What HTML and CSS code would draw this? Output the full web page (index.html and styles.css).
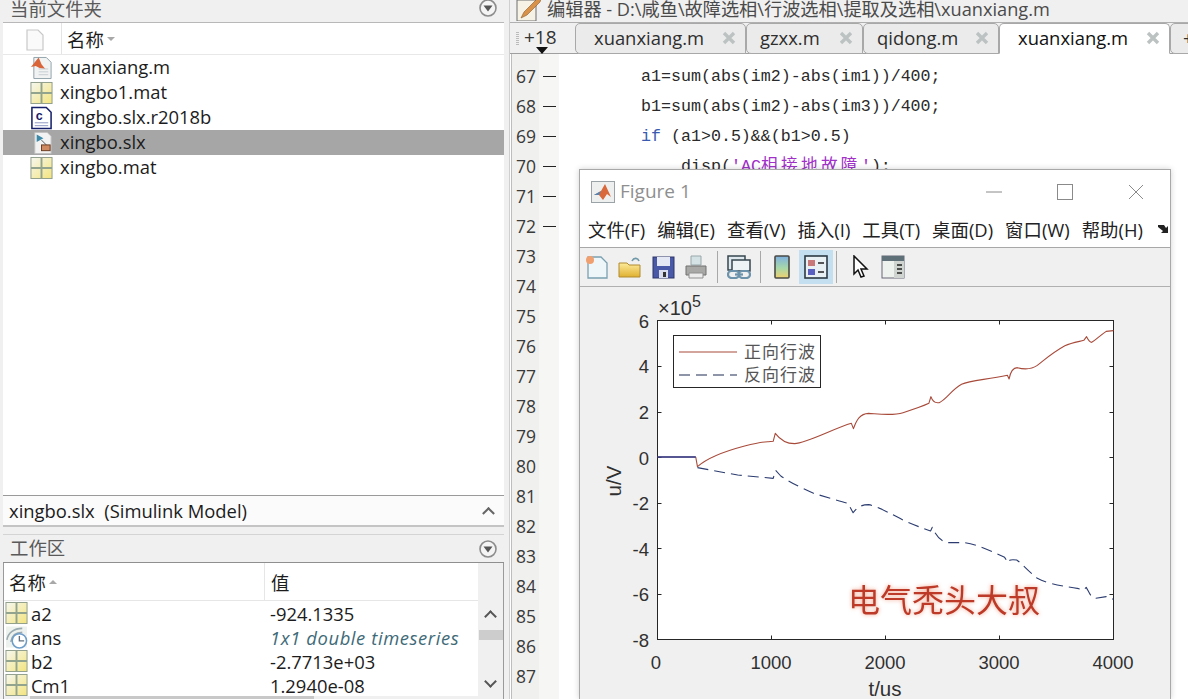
FILE: index.html
```html
<!DOCTYPE html>
<html lang="zh">
<head>
<meta charset="utf-8">
<title>MATLAB</title>
<link rel="stylesheet" href="styles.css">
</head>
<body>
<svg class="defs" width="0" height="0" aria-hidden="true">
  <defs>
    <linearGradient id="mat" x1="0" y1="0" x2="1" y2="1"><stop offset="0" stop-color="#f6f7f0"/><stop offset="1" stop-color="#f3e47e"/></linearGradient>
    <linearGradient id="cbar" x1="0" y1="0" x2="0" y2="1"><stop offset="0" stop-color="#7fb0e0"/><stop offset=".55" stop-color="#a8d8a8"/><stop offset="1" stop-color="#f0d070"/></linearGradient>
    <linearGradient id="folder" x1="0" y1="0" x2="0" y2="1"><stop offset="0" stop-color="#fdeb9c"/><stop offset="1" stop-color="#e0b030"/></linearGradient>
    <symbol id="i-mat" viewBox="0 0 24 24">
      <rect x="1" y="1" width="22" height="22" fill="url(#mat)" stroke="#8d9c88"/>
      <path d="M12 1V23M1 12H23" stroke="#93a48e" stroke-width="2" fill="none"/>
    </symbol>
    <symbol id="i-chevron" viewBox="0 0 20 20">
      <circle cx="10" cy="10" r="8" fill="#f4f4f4" stroke="#8c8c8c" stroke-width="1.6"/>
      <path d="M5.5 7.5H14.5L10 13.5Z" fill="#555"/>
    </symbol>
    <symbol id="i-x" viewBox="0 0 14 14">
      <path d="M2 2L12 12M12 2L2 12" stroke="#bcc2c2" stroke-width="3.4" fill="none"/>
    </symbol>
  </defs>
</svg>

<div class="app">
  <section class="left">
    <div class="panel-title files-title">
      <span>当前文件夹</span>
      <svg class="chev"><use href="#i-chevron"/></svg>
    </div>
    <div class="files-head">
      <div class="fh-icon">
        <svg width="20" height="22" viewBox="0 0 20 22"><path d="M2 1H13L18 6V21H2Z" fill="#fafafa" stroke="#c8c8c8" stroke-width="1.2"/></svg>
      </div>
      <div class="fh-name">名称<i class="sort-down"></i></div>
    </div>
    <ul class="files">
      <li class="file">
        <svg class="ficon" viewBox="0 0 24 24"><path d="M4 1H17L22 6V23H4Z" fill="#f1f3f3" stroke="#8ea0a8"/><path d="M1 11L9 1L12 8L16 13L10 12L6 10Z" fill="#d9653a"/><path d="M9 13H19M9 16H19M9 19H19" stroke="#c6ccd0"/></svg>
        <span class="fname">xuanxiang.m</span>
      </li>
      <li class="file"><svg class="ficon"><use href="#i-mat"/></svg><span class="fname">xingbo1.mat</span></li>
      <li class="file">
        <svg class="ficon" viewBox="0 0 24 24"><path d="M2 1H17L22 6V23H2Z" fill="#fff" stroke="#16206a" stroke-width="1.6"/><text class="cglyph" x="6" y="14">c</text><path d="M5 17H19M5 20H19" stroke="#8a94c0"/></svg>
        <span class="fname">xingbo.slx.r2018b</span>
      </li>
      <li class="file selected">
        <svg class="ficon" viewBox="0 0 24 24"><path d="M5 1H18L22 5V23H5Z" fill="#f2f2f2" stroke="#c0c0c0"/><path d="M7 3V11L14 7Z" fill="#3d8aa8"/><path d="M12 9L17 14" stroke="#555"/><rect x="12" y="14" width="9" height="6" fill="#cf8a62" stroke="#6b3b20"/></svg>
        <span class="fname">xingbo.slx</span>
      </li>
      <li class="file"><svg class="ficon"><use href="#i-mat"/></svg><span class="fname">xingbo.mat</span></li>
    </ul>
    <div class="details"><span>xingbo.slx&nbsp; (Simulink Model)</span><span class="caret-up"></span></div>
    <div class="panel-title work-title">
      <span class="wt-label">工作区</span>
      <svg class="chev"><use href="#i-chevron"/></svg>
    </div>
    <div class="workspace">
      <div class="ws-main">
        <div class="ws-head">
          <div class="ws-name">名称<i class="sort-up"></i></div>
          <div class="ws-val">值</div>
        </div>
        <div class="ws-row"><div class="ws-name"><svg class="wicon"><use href="#i-mat"/></svg>a2</div><div class="ws-val">-924.1335</div></div>
        <div class="ws-row">
          <div class="ws-name">
            <svg class="wicon" viewBox="0 0 24 24"><rect x="1" y="1" width="22" height="22" fill="#eef2ee"/><path d="M2 15C3 8 9 3 18 3M6 17C7 11 11 7 18 7" stroke="#9aaab0" stroke-width="1.6" fill="none"/><circle cx="15" cy="16" r="7.5" fill="#fff" stroke="#6c9cc8" stroke-width="1.6"/><path d="M15 11V16H20" stroke="#607080" stroke-width="1.4" fill="none"/></svg>ans
          </div>
          <div class="ws-val ts">1x1 double timeseries</div>
        </div>
        <div class="ws-row"><div class="ws-name"><svg class="wicon"><use href="#i-mat"/></svg>b2</div><div class="ws-val">-2.7713e+03</div></div>
        <div class="ws-row"><div class="ws-name"><svg class="wicon"><use href="#i-mat"/></svg>Cm1</div><div class="ws-val">1.2940e-08</div></div>
      </div>
      <div class="vscroll">
        <span class="sc-arrow up"></span>
        <span class="sc-thumb"></span>
        <span class="sc-arrow down"></span>
      </div>
    </div>
  </section>

  <section class="right">
    <div class="ed-title">
      <svg class="ed-icon" width="26" height="22" viewBox="0 0 26 22"><rect x="1" y="1" width="19" height="21" fill="#f6f2e6" stroke="#6f6f6f"/><path d="M5 19L8 13L21 0H25L24 3L11 16Z" fill="#d9924a" stroke="#8a5a2a" stroke-width=".6"/></svg>
      <span class="ed-text">编辑器 - D:\咸鱼\故障选相\行波选相\提取及选相\xuanxiang.m</span>
    </div>
    <div class="tabs">
      <div class="tab-more">
        <i class="grip"></i>
        <span>+18</span>
        <i class="tab-down"></i>
      </div>
      <div class="tab t1"><span>xuanxiang.m</span><svg class="tx"><use href="#i-x"/></svg></div>
      <div class="tab t2"><span>gzxx.m</span><svg class="tx"><use href="#i-x"/></svg></div>
      <div class="tab t3"><span>qidong.m</span><svg class="tx"><use href="#i-x"/></svg></div>
      <div class="tab t4 active"><span>xuanxiang.m</span><svg class="tx"><use href="#i-x"/></svg></div>
      <div class="tab t5"><span>+</span></div>
    </div>
    <div class="code">
      <div class="gutter">
        <div class="ln"><b>67</b><i></i></div>
        <div class="ln"><b>68</b><i></i></div>
        <div class="ln"><b>69</b><i></i></div>
        <div class="ln"><b>70</b><i></i></div>
        <div class="ln"><b>71</b><i></i></div>
        <div class="ln"><b>72</b><i></i></div>
        <div class="ln"><b>73</b></div>
        <div class="ln"><b>74</b></div>
        <div class="ln"><b>75</b></div>
        <div class="ln"><b>76</b></div>
        <div class="ln"><b>77</b></div>
        <div class="ln"><b>78</b></div>
        <div class="ln"><b>79</b></div>
        <div class="ln"><b>80</b></div>
        <div class="ln"><b>81</b></div>
        <div class="ln"><b>82</b></div>
        <div class="ln"><b>83</b></div>
        <div class="ln"><b>84</b></div>
        <div class="ln"><b>85</b></div>
        <div class="ln"><b>86</b></div>
        <div class="ln"><b>87</b></div>
      </div>
      <div class="src">
        <div class="cl">a1=sum(abs(im2)-abs(im1))/400;</div>
        <div class="cl">b1=sum(abs(im2)-abs(im3))/400;</div>
        <div class="cl"><span class="kw">if</span> (a1&gt;0.5)&amp;&amp;(b1&gt;0.5)</div>
        <div class="cl in2">disp(<span class="str">'AC<span class="cjk">相接地故障</span>'</span>);</div>
      </div>
    </div>
  </section>
</div>

<div class="figure">
  <div class="fig-title">
    <svg class="fig-logo" width="24" height="22" viewBox="0 0 24 22"><rect x=".5" y=".5" width="23" height="21" fill="#eef0f0" stroke="#9aa4a8"/><path d="M3 14L10 10L14 3L20 16L16 13L12 19L8 14Z" fill="#d9683a"/><path d="M3 14L10 10L8 14Z" fill="#4f86b8"/></svg>
    <span class="fig-name">Figure 1</span>
    <div class="win-btns">
      <svg width="16" height="16" viewBox="0 0 16 16"><path d="M0 8H16" stroke="#8a8a8a"/></svg>
      <svg width="16" height="16" viewBox="0 0 16 16"><rect x=".5" y=".5" width="15" height="15" fill="none" stroke="#8a8a8a"/></svg>
      <svg width="16" height="16" viewBox="0 0 16 16"><path d="M1 1L15 15M15 1L1 15" stroke="#8a8a8a"/></svg>
    </div>
  </div>
  <div class="fig-menu">
    <span>文件(F)</span><span>编辑(E)</span><span>查看(V)</span><span>插入(I)</span><span>工具(T)</span><span>桌面(D)</span><span>窗口(W)</span><span>帮助(H)</span>
    <svg class="menu-arrow" width="12" height="12" viewBox="0 0 12 12"><path d="M1 2L7 2L9 5L11 3V10H4L6 8L1 4Z" fill="#222"/></svg>
  </div>
  <div class="fig-tools">
    <svg class="tool" viewBox="0 0 24 24"><path d="M3 2H16L22 8V23H3Z" fill="#eef6fa" stroke="#7aa0b0" stroke-width="1.3"/><circle cx="5" cy="5" r="4" fill="#f0a070"/></svg>
    <svg class="tool" viewBox="0 0 24 24"><path d="M1 8H9L11 10H22V22H1Z" fill="url(#folder)" stroke="#b08a30"/><path d="M14 6C16 2 20 3 21 6" stroke="#6f98a8" stroke-width="1.6" fill="none"/></svg>
    <svg class="tool" viewBox="0 0 24 24"><rect x="2" y="2" width="21" height="21" fill="#4a58a8" stroke="#2c3468"/><rect x="6" y="2" width="13" height="9" fill="#e4e8f4"/><rect x="8" y="15" width="9" height="8" fill="#d8dcec"/><rect x="12" y="17" width="3" height="5" fill="#333"/></svg>
    <svg class="tool" viewBox="0 0 24 24"><path d="M7 1H17V10H7Z" fill="#d4e2e6" stroke="#98a8aa"/><path d="M2 11H22V20H2Z" fill="#a8a8a6" stroke="#707070"/><path d="M5 18H19V23H5Z" fill="#ececec" stroke="#909090"/></svg>
    <i class="sep"></i>
    <svg class="tool" viewBox="0 0 24 24"><rect x="1" y="1" width="17" height="14" fill="#dfe8ee" stroke="#37464e" stroke-width="1.5"/><rect x="5" y="5" width="18" height="11" fill="#eef3f6" stroke="#37464e" stroke-width="1.5"/><rect x="1" y="16" width="11" height="7" rx="3.5" fill="none" stroke="#6c93ab" stroke-width="2.2"/><rect x="12" y="16" width="11" height="7" rx="3.5" fill="none" stroke="#6c93ab" stroke-width="2.2"/><path d="M8 19.5H16" stroke="#6c93ab" stroke-width="2.2"/></svg>
    <i class="sep"></i>
    <svg class="tool" viewBox="0 0 24 24"><rect x="5" y="1" width="14" height="22" rx="1" fill="url(#cbar)" stroke="#4a4a44" stroke-width="1.6"/></svg>
    <span class="tool-on">
      <svg class="tool" viewBox="0 0 24 24"><rect x="1" y="1" width="22" height="22" fill="#e8f0f4" stroke="#2c3a44" stroke-width="1.6"/><rect x="4" y="5" width="7" height="6" fill="#c87878"/><rect x="4" y="14" width="7" height="6" fill="#5a60c0"/><path d="M14 8H20M14 17H20" stroke="#222" stroke-width="1.6"/></svg>
    </span>
    <i class="sep"></i>
    <svg class="tool pointer" viewBox="0 0 24 24"><path d="M6 1V19L10 15L13 22L16 21L13 14H19Z" fill="#fff" stroke="#111" stroke-width="1.5"/></svg>
    <svg class="tool" viewBox="0 0 24 24"><rect x="1" y="1" width="22" height="22" fill="#eef2ee" stroke="#667"/><rect x="1" y="1" width="22" height="5" fill="#607078"/><rect x="13" y="6" width="10" height="17" fill="#cfd4d0"/><path d="M16 10H21M16 14H21M16 18H21" stroke="#222" stroke-width="1.4"/></svg>
  </div>
  <div class="fig-body">
    <svg class="plot" width="590" height="412" viewBox="580 287 590 412">
      <rect x="657.5" y="320.5" width="456" height="319" fill="#fff" stroke="#262626" stroke-width="1"/>
      <path class="tick" d="M771.5 320.5v4M885.5 320.5v4M999.5 320.5v4M771.5 639.5v-4M885.5 639.5v-4M999.5 639.5v-4M657.5 366.5h4M657.5 412.5h4M657.5 457.5h4M657.5 503.5h4M657.5 548.5h4M657.5 594.5h4M1113.5 366.5h-4M1113.5 412.5h-4M1113.5 457.5h-4M1113.5 503.5h-4M1113.5 548.5h-4M1113.5 594.5h-4"/>

      <g transform="translate(600 290) scale(0.34435 0.33333)">
        <path class="red" d="M167 501L278 501L283 530C310 505 350 487 420 468S480 458 503 454L509 430C520 445 540 461 565 461C600 460 680 415 730 400L736 416C745 390 755 371 780 370C810 372 850 378 880 368C920 355 945 345 955 340L961 320C966 335 975 340 985 338C1005 330 1020 300 1050 283C1075 270 1120 270 1183 256L1188 267C1192 245 1200 233 1212 233C1230 238 1250 240 1270 226C1290 210 1310 190 1350 167C1370 158 1390 155 1405 151L1413 140C1418 150 1422 157 1428 157C1440 150 1450 138 1470 124L1491 122"/>
        <path class="navy-solid" d="M167 501L278 501"/>
        <path class="navy" d="M283 533L400 555L503 565L510 541L525 558C545 572 570 587 620 610C660 622 700 635 720 640L735 668C745 655 755 644 780 644C810 650 850 675 890 695C920 708 945 718 960 723L965 712C975 735 985 752 1010 758L1060 758C1100 765 1140 785 1175 802L1185 818C1188 808 1195 808 1210 810C1225 820 1240 840 1270 865C1290 876 1320 885 1390 896L1405 900L1412 892C1420 905 1425 925 1440 925L1470 920L1491 928"/>
      </g>

      <rect x="673.5" y="335.5" width="147" height="52" fill="#fff" stroke="#262626"/>
      <path class="red-plain" d="M679 352H737"/>
      <path class="navy-plain" d="M679 375H737"/>
      <text class="leg" x="744" y="358">正向行波</text>
      <text class="leg" x="744" y="381">反向行波</text>

      <text class="ax end" x="649" y="328">6</text>
      <text class="ax end" x="649" y="373">4</text>
      <text class="ax end" x="649" y="419">2</text>
      <text class="ax end" x="649" y="465">0</text>
      <text class="ax end" x="649" y="510">-2</text>
      <text class="ax end" x="649" y="556">-4</text>
      <text class="ax end" x="649" y="601">-6</text>
      <text class="ax end" x="649" y="647">-8</text>
      <text class="ax mid" x="656" y="669">0</text>
      <text class="ax mid" x="771" y="669">1000</text>
      <text class="ax mid" x="885" y="669">2000</text>
      <text class="ax mid" x="999" y="669">3000</text>
      <text class="ax mid" x="1113" y="669">4000</text>
      <text class="ax lab mid" x="885" y="696">t/us</text>
      <text class="ax lab mid" transform="translate(621 481) rotate(-90)">u/V</text>
      <text class="ax pow" x="658" y="315">×10<tspan class="sup" dy="-8">5</tspan></text>
      <text class="wm" x="848" y="612">电气秃头大叔</text>
    </svg>
  </div>
</div>
</body>
</html>
```

FILE: styles.css
```css
* { box-sizing: border-box; }
html, body { margin: 0; padding: 0; width: 1188px; height: 699px; overflow: hidden; }
body {
  background: #f0f0f0;
  font-family: "Open Sans", "Noto Sans CJK SC", sans-serif;
  font-size: 18.4px;
  color: #1c1c1c;
  position: relative;
}
.defs { position: absolute; }
.app { display: flex; height: 699px; }

/* left column */
.left { width: 510px; padding-left: 3px; padding-right: 5px; display: flex; flex-direction: column; border-right: 1px solid #cfcfcf; }
.panel-title { display: flex; align-items: center; justify-content: space-between; color: #5a5a5a; padding: 0 6px 0 7px; }
.files-title { margin-top: -6px; height: 29px; border-bottom: 1px solid #b8b8b8; }
.chev { width: 20px; height: 20px; }
.files-head { display: flex; height: 32px; background: #fff; border-bottom: 1px solid #e8e8e8; }
.fh-icon { width: 59px; display: flex; justify-content: center; align-items: center; padding-left: 6px; padding-top: 2px; border-right: 1px solid #e4e4e4; }
.fh-name { padding-left: 5px; display: flex; align-items: center; gap: 3px; }
.sort-down { width: 0; height: 0; border: 4px solid transparent; border-top: 4px solid #a8a8a8; border-bottom: 0; }
.sort-up { width: 0; height: 0; border: 4px solid transparent; border-bottom: 4px solid #a8a8a8; border-top: 0; margin-left: 3px; }
.files { list-style: none; margin: 0; padding: 0; flex: 0 0 440px; background: #fff; }
.file { height: 25px; line-height: 24px; display: flex; align-items: center; gap: 7px; padding-left: 27px; white-space: nowrap; }
.fname { margin-top: -2px; }
.file.selected { background: #a6a6a6; }
.ficon { width: 23px; height: 24px; flex: none; }
.cglyph { font: bold 13px "Liberation Sans", sans-serif; fill: #16206a; }
.details { height: 32px; display: flex; align-items: center; justify-content: space-between; padding: 0 11px 0 6px; background: #fbfbfb; border-top: 1px solid #9a9a9a; border-bottom: 2px solid #c4c4c4; }
.caret-up { width: 9px; height: 9px; border-left: 2px solid #666; border-top: 2px solid #666; transform: rotate(45deg) translate(2px, 2px); }
.work-title { height: 29px; margin-top: 7px; border-top: 1px solid #d4d4d4; border-bottom: 1px solid #8f8f8f; }
.wt-label { margin-top: -3px; }
.workspace { display: flex; flex: 1; min-height: 0; border-left: 1px solid #9a9a9a; border-right: 1px solid #9a9a9a; background: #fff; }
.ws-main { flex: 1; overflow: hidden; position: relative; }
.ws-main::after { content: ""; position: absolute; left: 0; right: 0; bottom: 0; height: 3px; background: linear-gradient(to right, #f0f0f0 26px, #c8c8c8 26px 310px, #f0f0f0 310px); }
.ws-head { display: flex; height: 38px; align-items: center; border-bottom: 1px solid #e6e6e6; }
.ws-head .ws-name { height: 38px; border-right: 1px solid #e6e6e6; padding-left: 5px; }
.ws-name { width: 261px; display: flex; align-items: center; flex: none; }
.ws-val { padding-left: 5px; white-space: nowrap; }
.ws-head .ws-val { padding-left: 6px; }
.ws-row { display: flex; height: 24px; align-items: center; }
.ws-row .ws-name { gap: 3px; padding-left: 1px; }
.wicon { width: 23px; height: 24px; flex: none; }
.ts { font-style: italic; color: #3e6a78; letter-spacing: .6px; }
.vscroll { width: 25px; background: #f0f0f0; position: relative; display: flex; flex-direction: column; align-items: center; padding-top: 49px; }
.sc-thumb { width: 24px; height: 10px; background: #cdcdcd; margin-top: 9px; }
.sc-arrow { width: 9px; height: 9px; border: solid #555; border-width: 2px 0 0 2px; transform: rotate(45deg); }
.sc-arrow.down { transform: rotate(225deg); margin-top: 37px; }

/* editor */
.right { flex: 1; min-width: 0; display: flex; flex-direction: column; }
.ed-title { height: 23px; display: flex; align-items: center; gap: 5px; padding-left: 6px; border-bottom: 1px solid #b0b0b0; color: #4a4a4a; font-size: 18.2px; overflow: hidden; white-space: nowrap; }
.ed-text { margin-top: -6px; }
.ed-icon { flex: none; margin-top: -2px; }
.tabs { display: flex; height: 31px; background: #f0f0f0; border-bottom: 1px solid #9f9f9f; position: relative; }
.tab-more { width: 65px; flex: none; position: relative; padding: 0 0 2px 14px; color: #333; font-size: 19px; display: flex; align-items: center; }
.grip { position: absolute; left: 6px; top: 9px; width: 3px; height: 14px; background: repeating-linear-gradient(#bbb 0 1px, transparent 1px 2px); }
.tab-down { position: absolute; left: 26px; bottom: -1px; width: 0; height: 0; border: 6px solid transparent; border-top: 7px solid #111; border-bottom: 0; }
.tab { flex: none; display: flex; align-items: center; justify-content: space-between; border: 1px solid #a8a8a8; border-radius: 5px 5px 0 5px; margin-bottom: -1px; background: #ebebeb; padding: 0 9px 2px 18px; color: #2e2e2e; }
.tab.t1 { width: 171px; }
.tab.t2 { width: 117px; padding-left: 13px; }
.tab.t3 { width: 136px; padding-left: 13px; }
.tab.t4 { width: 171px; }
.tab.t5 { width: 30px; padding-left: 12px; }
.tab.active { background: #fff; color: #111; border-bottom-color: #fff; border-radius: 5px 5px 0 0; }
.tx { width: 14px; height: 14px; flex: none; }
.code { flex: 1; min-height: 0; display: flex; background: #fff; overflow: hidden; }
.gutter { width: 48px; background: linear-gradient(to right, #f0f0ee 0 27px, #f6f6f4 27px); padding-top: 7px; flex: none; border-left: 1px solid #bdbdbd; margin-left: 1px; }
.ln { height: 30px; display: flex; align-items: center; padding-left: 4px; }
.ln b { font-weight: 400; width: 27px; color: #3a3a3a; font-family: "Open Sans", sans-serif; font-size: 17.5px; }
.ln i { width: 13px; height: 1px; background: #222; }
.src { padding: 8px 0 0 82px; font-family: "Liberation Mono", "Noto Sans CJK SC", monospace; font-size: 16.65px; color: #2a2a2a; }
.cl { height: 30px; line-height: 30px; white-space: pre; }
.in2 { padding-left: 40px; }
.kw { color: #3a5ab0; }
.str { color: #a030c8; }
.cjk { letter-spacing: 3.35px; }

/* figure window */
.figure { position: absolute; left: 579px; top: 169px; width: 592px; height: 530px; background: #fff; border: 1px solid #a8a8a8; box-shadow: 0 0 6px rgba(0,0,0,.18); }
.fig-title { height: 44px; display: flex; align-items: center; padding-left: 11px; }
.fig-logo { flex: none; }
.fig-name { color: #8f8f8f; font-size: 19px; margin: -2px 0 0 5px; }
.win-btns { margin-left: auto; display: flex; gap: 55px; padding-right: 26px; }
.fig-menu { height: 34px; display: flex; align-items: center; gap: 12px; padding: 0 0 3px 8px; border-bottom: 1px solid #a8a8a8; font-size: 18.4px; color: #222; white-space: nowrap; }
.menu-arrow { flex: none; margin-left: 2px; }
.fig-tools { height: 39px; display: flex; align-items: center; padding-left: 5px; gap: 9px; background: #f0f0f0; border-bottom: 1px solid #b0b0b0; }
.tool { width: 24px; height: 24px; flex: none; }
.tool.pointer { margin-left: 2px; }
.sep { width: 1px; height: 32px; background: #a8a8a8; flex: none; }
.tool-on { width: 34px; height: 34px; background: #c4dff0; display: flex; align-items: center; justify-content: center; flex: none; margin: 0 -6px 0 -4px; }
.fig-body { background: #f0f0f0; }
.plot { display: block; }
.tick { stroke: #262626; fill: none; }
.red { fill: none; stroke: #a84a3a; stroke-width: 1.1; stroke-linejoin: round; vector-effect: non-scaling-stroke; }
.navy { fill: none; stroke: #2c3c70; stroke-width: 1.1; stroke-linejoin: round; stroke-dasharray: 11 6; vector-effect: non-scaling-stroke; }
.navy-solid { fill: none; stroke: #2c3c90; stroke-width: 1.3; vector-effect: non-scaling-stroke; }
.red-plain { stroke: #a84a3a; stroke-width: 1.1; }
.navy-plain { stroke: #1f2c55; stroke-width: 1.1; stroke-dasharray: 11 6; }
.leg { font-family: "Noto Sans CJK SC", sans-serif; font-size: 17px; fill: #555; letter-spacing: 1px; }
.ax { font-family: "Liberation Sans", sans-serif; font-size: 18.5px; fill: #303030; }
.lab { font-size: 20.5px; }
.pow { font-size: 20px; }
.sup { font-size: 16px; }
.end { text-anchor: end; }
.mid { text-anchor: middle; }
.wm { font-family: "Noto Sans CJK SC", sans-serif; font-size: 32px; fill: #bd3a28; filter: drop-shadow(0 0 2px #f2a58c); }
```
